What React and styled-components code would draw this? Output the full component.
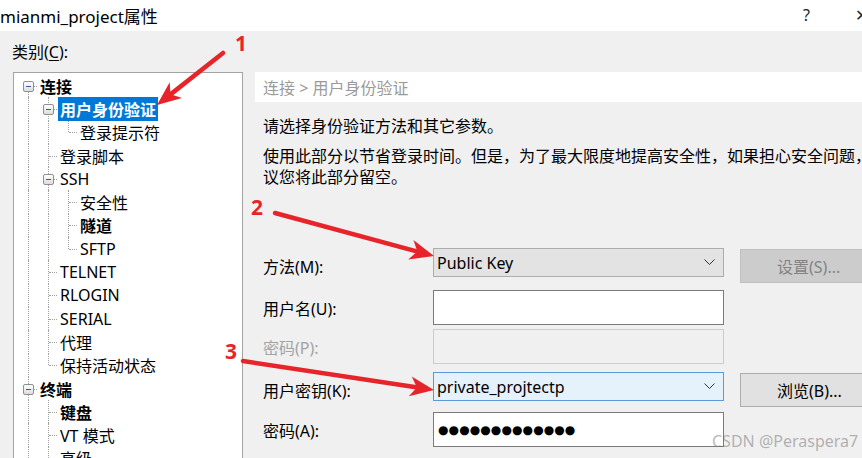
import styled, { createGlobalStyle } from "styled-components";

const GlobalStyle = createGlobalStyle`
  html, body { margin: 0; padding: 0; }
  body {
    width: 862px;
    height: 458px;
    overflow: hidden;
    background: #f0f0f0;
    font-family: "Noto Sans", "Noto Sans CJK SC", sans-serif;
    font-size: 16px;
    color: #000;
  }
`;

const TREE = [
  {
    label: "连接",
    bold: true,
    children: [
      { label: "用户身份验证", bold: true, selected: true, children: [{ label: "登录提示符" }] },
      { label: "登录脚本" },
      {
        label: "SSH",
        children: [{ label: "安全性" }, { label: "隧道", bold: true }, { label: "SFTP" }],
      },
      { label: "TELNET" },
      { label: "RLOGIN" },
      { label: "SERIAL" },
      { label: "代理" },
      { label: "保持活动状态" },
    ],
  },
  {
    label: "终端",
    bold: true,
    children: [
      { label: "键盘", bold: true },
      { label: "VT 模式" },
      { label: "高级" },
      { label: "外观" },
    ],
  },
  { label: "日志记录" },
];

function flatten(nodes, level = 0, through = [], out = []) {
  nodes.forEach((node, i) => {
    const isLast = i === nodes.length - 1;
    out.push({
      ...node,
      level,
      through,
      isLast,
      isFirstRoot: level === 0 && i === 0,
      hasChildren: !!node.children,
    });
    if (node.children) flatten(node.children, level + 1, [...through, !isLast], out);
  });
  return out;
}

const ROWS = flatten(TREE);

const ARROWS = [
  { from: [223, 53], to: [157, 105] },
  { from: [275, 213], to: [434, 256] },
  { from: [243, 361], to: [434, 390] },
];

function arrowHead([x1, y1], [x2, y2]) {
  const len = Math.hypot(x2 - x1, y2 - y1);
  const dx = (x2 - x1) / len;
  const dy = (y2 - y1) / len;
  const L = 24;
  const w = 10;
  const bx = x2 - dx * L;
  const by = y2 - dy * L;
  const nx = -dy;
  const ny = dx;
  const pts = [
    [x2, y2],
    [bx + nx * w, by + ny * w],
    [x2 - dx * L * 0.72, y2 - dy * L * 0.72],
    [bx - nx * w, by - ny * w],
  ];
  return { points: pts.map((p) => p.join(",")).join(" "), end: [x2 - dx * L * 0.75, y2 - dy * L * 0.75] };
}

function Chevron() {
  return (
    <svg width="11" height="7" viewBox="0 0 11 7">
      <polyline points="0.5,0.5 5.5,5.5 10.5,0.5" fill="none" stroke="#333" strokeWidth="1" />
    </svg>
  );
}

function App() {
  return (
    <>
      <GlobalStyle />
      <Window>
        <TitleBar>
          <Title>mianmi_project属性</Title>
          <TitleButton $x={803}>?</TitleButton>
          <TitleButton $x={855}>✕</TitleButton>
        </TitleBar>
        <Body>
          <LeftColumn>
            <CategoryLabel>
              类别(<u>C</u>):
            </CategoryLabel>
            <TreeBox>
              {ROWS.map((row, i) => (
                <TreeRow key={i}>
                  {row.through.map((t, j) => (
                    <Guide key={j} $up={t} $down={t} />
                  ))}
                  <Guide $up={!row.isFirstRoot} $down={!row.isLast} $branch>
                    {row.hasChildren && (
                      <Expander>
                        <Minus />
                      </Expander>
                    )}
                  </Guide>
                  <NodeLabel $bold={row.bold} $selected={row.selected}>
                    {row.label}
                  </NodeLabel>
                </TreeRow>
              ))}
            </TreeBox>
          </LeftColumn>

          <RightColumn>
            <Crumb>连接 &gt; 用户身份验证</Crumb>
            <Para>请选择身份验证方法和其它参数。</Para>
            <Para $mt={9}>
              <Line>使用此部分以节省登录时间。但是，为了最大限度地提高安全性，如果担心安全问题，建</Line>
              <Line>议您将此部分留空。</Line>
            </Para>

            <Form>
              <FormRow $mt={0}>
                <FieldLabel>方法(M):</FieldLabel>
                <Combo>
                  <span>Public Key</span>
                  <Chevron />
                </Combo>
                <Button disabled>设置(S)...</Button>
              </FormRow>
              <FormRow $mt={7}>
                <FieldLabel>用户名(U):</FieldLabel>
                <Input />
              </FormRow>
              <FormRow $mt={4}>
                <FieldLabel $disabled>密码(P):</FieldLabel>
                <Input $disabled />
              </FormRow>
              <FormRow $mt={8}>
                <FieldLabel>用户密钥(K):</FieldLabel>
                <Combo $focused>
                  <span>private_projtectp</span>
                  <Chevron />
                </Combo>
                <Button>浏览(B)...</Button>
              </FormRow>
              <FormRow $mt={5}>
                <FieldLabel>密码(A):</FieldLabel>
                <Input>
                  <Dots>●●●●●●●●●●●●●</Dots>
                </Input>
              </FormRow>
            </Form>
          </RightColumn>
        </Body>

        <Annotations width="862" height="458" viewBox="0 0 862 458">
          {ARROWS.map((a, i) => {
            const head = arrowHead(a.from, a.to);
            return (
              <g key={i} fill="#e8242b" stroke="#e8242b">
                <line
                  x1={a.from[0]}
                  y1={a.from[1]}
                  x2={head.end[0]}
                  y2={head.end[1]}
                  strokeWidth="4.5"
                  strokeLinecap="round"
                />
                <polygon points={head.points} stroke="none" />
              </g>
            );
          })}
        </Annotations>
        <Marker $x={235} $y={33}>1</Marker>
        <Marker $x={251} $y={197}>2</Marker>
        <Marker $x={225} $y={341}>3</Marker>
        <Watermark>CSDN @Peraspera7</Watermark>
      </Window>
    </>
  );
}

const Window = styled.div`
  position: relative;
  width: 862px;
  height: 458px;
  overflow: hidden;
  display: flex;
  flex-direction: column;
`;

const TitleBar = styled.div`
  position: relative;
  flex: none;
  height: 31px;
  background: #fff;
  display: flex;
  align-items: center;
`;

const Title = styled.div`
  font-size: 17px;
  margin-top: -1px;
  white-space: nowrap;
`;

const TitleButton = styled.span`
  position: absolute;
  left: ${(p) => p.$x}px;
  top: 4px;
  font-size: 16px;
  color: #222;
`;

const Body = styled.div`
  flex: 1;
  display: grid;
  grid-template-columns: 255px 1fr;
  min-height: 0;
`;

const LeftColumn = styled.div`
  display: flex;
  flex-direction: column;
  padding-left: 12px;
  min-height: 0;
`;

const CategoryLabel = styled.div`
  margin-top: 11px;
  line-height: 20px;
  height: 20px;
  white-space: nowrap;
  u {
    text-underline-offset: 2px;
  }
`;

const TreeBox = styled.div`
  margin-top: 10px;
  margin-left: 1px;
  width: 230px;
  flex: 1;
  box-sizing: border-box;
  background: #fff;
  border: 1px solid #a3a3a3;
  border-bottom: none;
  padding: 1px 0 0 4px;
  overflow: hidden;
`;

const TreeRow = styled.div`
  display: flex;
  align-items: center;
  height: 23.3px;
`;

const Guide = styled.span`
  position: relative;
  flex: none;
  width: 20px;
  height: 100%;
  &::before {
    content: "";
    display: ${(p) => (p.$up || p.$down ? "block" : "none")};
    position: absolute;
    left: 10px;
    top: ${(p) => (p.$up ? "0" : "50%")};
    bottom: ${(p) => (p.$down ? "0" : "50%")};
    border-left: 1px dotted #a0a0a0;
  }
  &::after {
    content: "";
    display: ${(p) => (p.$branch ? "block" : "none")};
    position: absolute;
    left: 11px;
    right: 1px;
    top: 50%;
    border-top: 1px dotted #a0a0a0;
  }
`;

const Expander = styled.span`
  position: absolute;
  z-index: 1;
  left: 5px;
  top: 50%;
  margin-top: -5px;
  width: 9px;
  height: 9px;
  border: 1px solid #8f8f8f;
  border-radius: 2px;
  background: linear-gradient(#ffffff, #dcdcdc);
  display: flex;
  align-items: center;
  justify-content: center;
`;

const Minus = styled.span`
  width: 5px;
  height: 1px;
  background: #3b5a94;
`;

const NodeLabel = styled.span`
  padding: 0 2px;
  height: 100%;
  display: flex;
  align-items: center;
  white-space: nowrap;
  font-weight: ${(p) => (p.$bold ? 700 : 400)};
  background: ${(p) => (p.$selected ? "#0078d7" : "transparent")};
  color: ${(p) => (p.$selected ? "#fff" : "#000")};
`;

const RightColumn = styled.div`
  display: flex;
  flex-direction: column;
  min-width: 0;
`;

const Crumb = styled.div`
  margin-top: 41px;
  height: 30px;
  background: #fff;
  padding-left: 8px;
  display: flex;
  align-items: center;
  color: #9a9a9a;
  white-space: nowrap;
`;

const Para = styled.div`
  margin-top: ${(p) => (p.$mt != null ? p.$mt : 14)}px;
  padding-left: 8px;
  line-height: 21px;
  white-space: nowrap;
  overflow: hidden;
`;

const Line = styled.div`
  white-space: nowrap;
`;

const Form = styled.div`
  margin-top: 60px;
  padding-left: 8px;
  display: flex;
  flex-direction: column;
`;

const FormRow = styled.div`
  margin-top: ${(p) => p.$mt}px;
  height: 35px;
  display: grid;
  grid-template-columns: 154px 291px 140px;
  column-gap: 16px;
  align-items: start;
`;

const FieldLabel = styled.div`
  align-self: center;
  white-space: nowrap;
  color: ${(p) => (p.$disabled ? "#a3a3a3" : "#000")};
`;

const Combo = styled.div`
  box-sizing: border-box;
  height: 29px;
  border: 1px solid ${(p) => (p.$focused ? "#5a9ad8" : "#adadad")};
  background: ${(p) => (p.$focused ? "#e5f1fb" : "#e3e3e3")};
  display: flex;
  align-items: center;
  justify-content: space-between;
  padding: 0 8px 0 3px;
  white-space: nowrap;
  svg {
    flex: none;
  }
`;

const Input = styled.div`
  box-sizing: border-box;
  height: 35px;
  border: 1px solid ${(p) => (p.$disabled ? "#cccccc" : "#7a7a7a")};
  background: ${(p) => (p.$disabled ? "#f0f0f0" : "#fff")};
  display: flex;
  align-items: center;
  padding-left: 4px;
`;

const Dots = styled.span`
  font-family: "DejaVu Sans", sans-serif;
  font-size: 12px;
  letter-spacing: 0.1px;
  color: #000;
  margin-top: 1px;
`;

const Button = styled.button`
  box-sizing: border-box;
  margin-top: 1px;
  height: 34px;
  width: 140px;
  padding: 0 0 0 36px;
  font: inherit;
  text-align: left;
  border: 1px solid ${(p) => (p.disabled ? "#bfbfbf" : "#adadad")};
  background: ${(p) => (p.disabled ? "#cccccc" : "#e1e1e1")};
  color: ${(p) => (p.disabled ? "#838383" : "#000")};
  white-space: nowrap;
`;

const Annotations = styled.svg`
  position: absolute;
  left: 0;
  top: 0;
  pointer-events: none;
`;

const Marker = styled.span`
  position: absolute;
  left: ${(p) => p.$x}px;
  top: ${(p) => p.$y}px;
  font-size: 21px;
  font-weight: 700;
  color: #e8242b;
  line-height: 1;
`;

const Watermark = styled.span`
  position: absolute;
  left: 712px;
  top: 430px;
  font-size: 16px;
  color: rgba(120, 120, 120, 0.55);
  white-space: nowrap;
  pointer-events: none;
`;

export default App;
